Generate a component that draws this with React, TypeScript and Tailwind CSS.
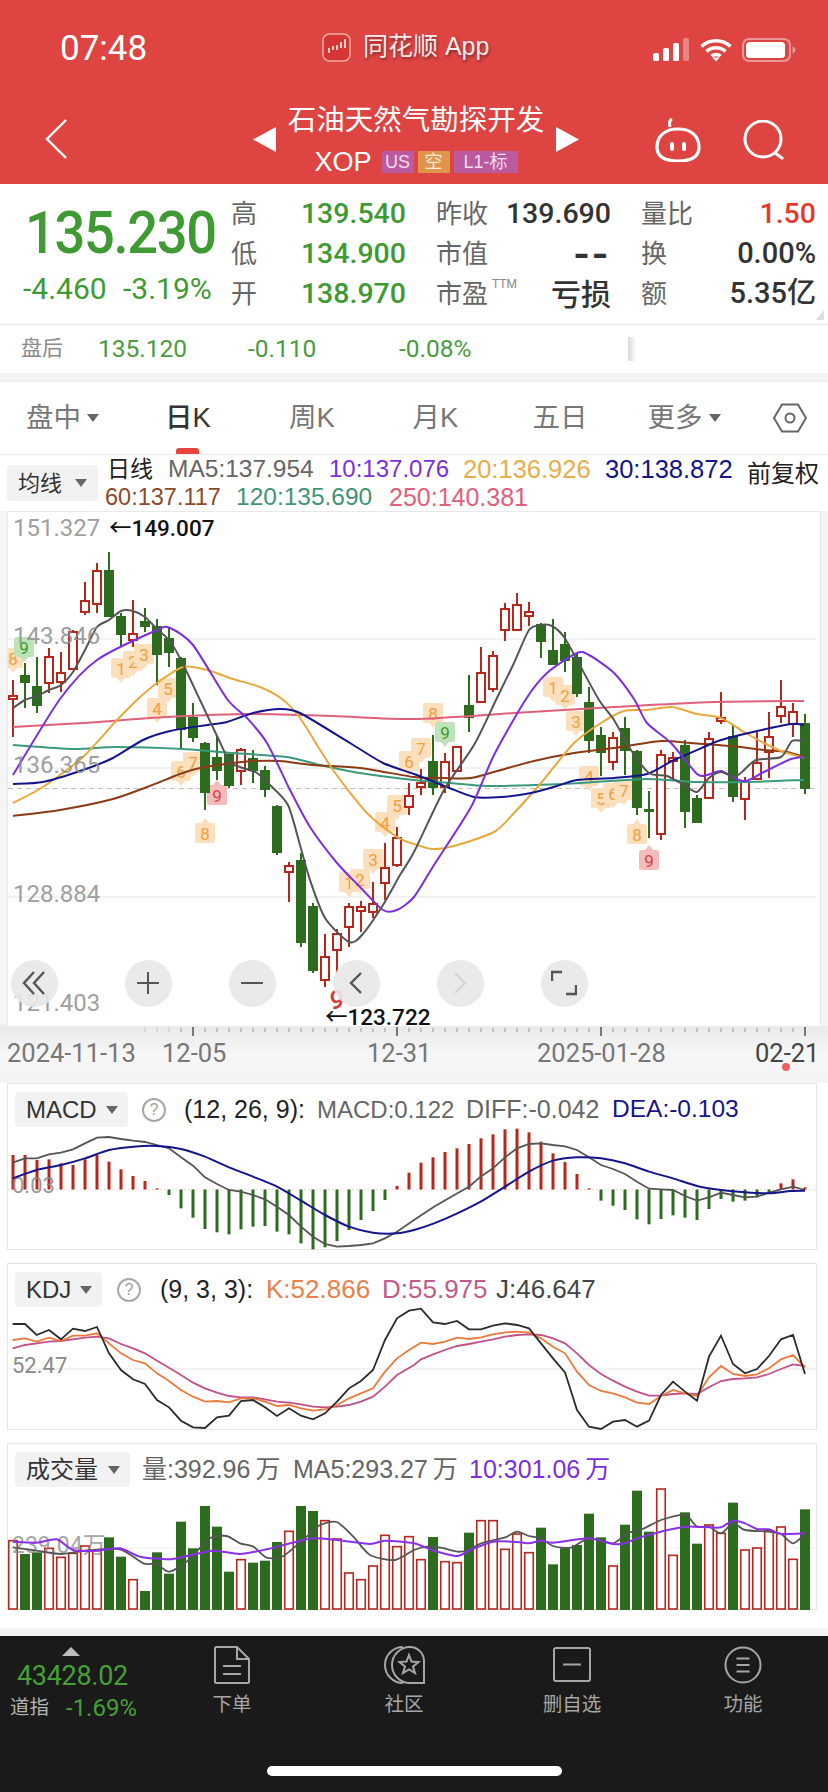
import React from 'react';

type Pt = [number, number];

const ROBOTO = "[font-family:Roboto,'Noto_Sans_CJK_SC',sans-serif]";
const UP = '#b8261c';
const DOWN = '#2d6b1e';

// [red?, high, bodyTop, bodyBottom, low]
const CANDLES: [number, number, number, number, number][] = [
  [1, 680, 696, 699, 737], [0, 663, 675, 683, 708], [0, 657, 686, 706, 713], [1, 648, 657, 683, 693],
  [1, 652, 673, 682, 692], [1, 630, 632, 669, 670], [1, 582, 601, 612, 615], [1, 563, 571, 604, 613],
  [0, 552, 570, 617, 617], [0, 613, 616, 635, 647], [1, 600, 634, 640, 647], [0, 608, 621, 627, 632],
  [0, 619, 626, 655, 685], [0, 628, 638, 653, 667], [0, 657, 658, 730, 748], [0, 703, 717, 738, 742],
  [0, 742, 743, 793, 810], [0, 736, 757, 771, 780], [0, 752, 754, 786, 788], [1, 748, 750, 771, 785],
  [0, 750, 758, 771, 783], [0, 766, 770, 790, 797], [0, 805, 806, 853, 855], [1, 862, 866, 872, 902],
  [0, 853, 860, 943, 947], [0, 903, 906, 971, 973], [1, 934, 957, 980, 987], [1, 929, 934, 950, 973],
  [1, 903, 907, 927, 947], [1, 901, 907, 911, 932], [1, 882, 904, 912, 918], [1, 843, 868, 883, 900],
  [1, 827, 838, 865, 867], [1, 783, 796, 807, 815], [1, 769, 783, 787, 795], [0, 735, 761, 788, 795],
  [1, 753, 762, 787, 793], [1, 747, 747, 771, 771], [0, 675, 705, 718, 732], [1, 647, 673, 702, 703],
  [1, 651, 656, 689, 692], [1, 603, 609, 630, 641], [1, 593, 605, 630, 630], [1, 602, 612, 616, 626],
  [0, 623, 624, 642, 658], [0, 619, 650, 665, 665], [0, 632, 644, 661, 672], [0, 653, 657, 694, 697],
  [0, 687, 702, 741, 753], [0, 727, 735, 753, 776], [1, 732, 738, 762, 770], [0, 717, 728, 751, 775],
  [0, 750, 751, 808, 815], [0, 791, 809, 812, 838], [1, 750, 755, 834, 840], [1, 752, 758, 761, 780],
  [0, 740, 745, 812, 828], [0, 795, 798, 823, 823], [1, 732, 739, 798, 798], [1, 692, 718, 721, 724],
  [0, 725, 736, 797, 802], [1, 777, 782, 799, 820], [1, 732, 763, 779, 779], [1, 712, 737, 752, 778],
  [1, 680, 707, 716, 723], [1, 703, 712, 724, 737], [0, 714, 723, 789, 794],
];

const MA: { color: string; pts: Pt[] }[] = [
  { color: '#e0607a', pts: [[13, 727], [83, 723], [167, 717], [253, 714], [333, 716], [414, 719], [514, 713], [614, 707], [714, 702], [804, 701]] },
  { color: '#3a9a7c', pts: [[13, 745], [73, 749], [117, 747], [183, 749], [233, 753], [287, 757], [320, 765], [360, 773], [414, 780], [451, 783], [487, 786], [534, 785], [581, 783], [647, 779], [697, 782], [747, 782], [804, 780]] },
  { color: '#8c3a14', pts: [[13, 816], [60, 810], [113, 799], [147, 787], [180, 774], [200, 768], [233, 763], [253, 761], [280, 761], [313, 765], [360, 768], [414, 777], [444, 778], [471, 778], [497, 771], [534, 761], [574, 753], [614, 748], [661, 741], [691, 743], [731, 746], [764, 750], [787, 752], [804, 757]] },
  { color: '#e8a93c', pts: [[13, 803], [43, 787], [83, 757], [117, 720], [138, 699], [157, 683], [183, 667], [207, 670], [233, 679], [260, 687], [282, 699], [300, 718], [333, 770], [367, 813], [397, 837], [414, 844], [432, 849], [454, 846], [494, 832], [514, 813], [541, 783], [574, 743], [601, 723], [624, 711], [647, 710], [672, 707], [697, 714], [721, 718], [744, 732], [764, 743], [781, 751], [804, 758]] },
  { color: '#14148c', pts: [[13, 784], [43, 782], [83, 770], [113, 758], [143, 740], [170, 731], [207, 725], [227, 722], [253, 713], [280, 709], [300, 713], [350, 743], [383, 763], [414, 774], [447, 787], [474, 797], [501, 797], [531, 793], [557, 786], [577, 780], [614, 778], [647, 774], [674, 760], [704, 747], [721, 740], [757, 731], [791, 724], [804, 725]] },
  { color: '#7b2fe0', pts: [[13, 775], [60, 699], [97, 660], [157, 630], [170, 628], [193, 645], [227, 699], [247, 718], [267, 743], [290, 790], [310, 827], [337, 863], [360, 887], [383, 910], [397, 910], [414, 897], [434, 865], [471, 807], [494, 755], [526, 699], [547, 673], [577, 653], [589, 655], [614, 673], [634, 699], [647, 723], [671, 743], [697, 774], [707, 775], [721, 771], [734, 778], [746, 781], [764, 772], [791, 759], [804, 757]] },
  { color: '#555555', pts: [[13, 708], [25, 700], [37, 696], [49, 690], [61, 685], [73, 672], [85, 650], [97, 627], [109, 620], [121, 611], [133, 611], [145, 617], [157, 629], [169, 640], [181, 660], [200, 700], [217, 736], [230, 762], [240, 767], [257, 773], [270, 785], [288, 805], [300, 845], [310, 880], [325, 918], [349, 942], [362, 935], [383, 905], [400, 875], [414, 852], [444, 790], [474, 745], [496, 700], [514, 663], [529, 630], [541, 625], [552, 626], [564, 637], [577, 660], [599, 700], [614, 720], [631, 750], [649, 773], [667, 776], [684, 785], [697, 792], [709, 778], [721, 772], [734, 777], [742, 772], [756, 760], [781, 757], [792, 741], [804, 741]] },
];

// signal tags: [x, y, text, tone, tip points up]
const TAGS: [number, number, string, 'o' | 'g' | 'r', boolean][] = [
  [13, 658, '8', 'o', false], [24, 647, '9', 'g', false], [121, 668, '1', 'o', false], [133, 661, '2', 'o', false],
  [144, 654, '3', 'o', false], [157, 708, '4', 'o', false], [168, 688, '5', 'o', false], [181, 771, '6', 'o', false],
  [193, 762, '7', 'o', false], [205, 833, '8', 'o', true], [217, 795, '9', 'r', true], [349, 882, '1', 'o', false],
  [360, 879, '2', 'o', false], [373, 859, '3', 'o', false], [385, 822, '4', 'o', false], [397, 805, '5', 'o', false],
  [409, 761, '6', 'o', false], [421, 748, '7', 'o', false], [433, 713, '8', 'o', false], [445, 732, '9', 'g', false],
  [553, 687, '1', 'o', false], [565, 695, '2', 'o', false], [576, 721, '3', 'o', false], [589, 776, '4', 'o', false],
  [601, 798, '5', 'o', false], [613, 793, '6', 'o', false], [624, 790, '7', 'o', false], [637, 834, '8', 'o', true],
  [649, 860, '9', 'r', true],
];

const TAG_TONE = {
  o: { fill: '#fcdfbd', text: '#efa040' },
  g: { fill: '#bfe3b8', text: '#3c9a32' },
  r: { fill: '#f5bcbc', text: '#e04040' },
};

const PRICE_LABELS: [string, number][] = [['151.327', 536], ['143.846', 644], ['136.365', 773], ['128.884', 902], ['121.403', 1011]];

// reference crops were read at 3x, so these tables hold crop coordinates
const MACD_TOPS = [255, 255, 270, 268, 280, 285, 268, 255, 275, 298, 318, 333, 355, 375, 415, 443, 477, 487, 493, 478, 470, 468, 485, 493, 520, 538, 532, 513, 480, 450, 423, 390, 348, 308, 278, 262, 246, 235, 222, 205, 193, 178, 176, 187, 215, 250, 276, 312, 355, 392, 407, 420, 448, 463, 447, 436, 443, 450, 417, 387, 395, 392, 382, 368, 340, 328, 352];

const VOLUME: [number, number][] = [
  [1, 332], [0, 372], [0, 367], [1, 355], [1, 382], [1, 370], [1, 348], [1, 362], [0, 322], [0, 380], [1, 449], [0, 483],
  [0, 367], [0, 431], [0, 275], [0, 355], [0, 228], [0, 290], [0, 425], [1, 389], [0, 398], [0, 392], [0, 336], [1, 304],
  [0, 228], [0, 243], [1, 272], [1, 327], [1, 429], [1, 449], [1, 408], [1, 316], [1, 350], [1, 320], [1, 389], [0, 321],
  [1, 395], [1, 398], [0, 308], [1, 272], [1, 272], [1, 358], [1, 312], [1, 368], [0, 293], [0, 403], [0, 355], [0, 345],
  [0, 251], [0, 322], [1, 408], [0, 284], [0, 182], [0, 305], [1, 177], [1, 376], [0, 247], [0, 341], [1, 285], [1, 310],
  [0, 218], [1, 360], [1, 354], [1, 302], [1, 291], [1, 388], [0, 238],
];

const crop = (left: Pt[], right: Pt[], y0: number): Pt[] => [
  ...left.map(([x, y]): Pt => [x / 3, y0 + y / 3]),
  ...right.map(([x, y]): Pt => [414 + x / 3, y0 + y / 3]),
];

const DIFF = crop(
  [[38, 278], [75, 265], [110, 265], [147, 253], [183, 248], [219, 238], [255, 220], [291, 203], [327, 201], [363, 207], [399, 212], [435, 216], [471, 225], [507, 235], [543, 262], [579, 287], [615, 322], [651, 342], [687, 360], [723, 365], [759, 375], [795, 388], [831, 410], [867, 435], [903, 470], [939, 500], [975, 522], [1011, 530], [1047, 528], [1083, 525], [1119, 520], [1155, 505], [1191, 485]],
  [[0, 450], [60, 410], [130, 370], [165, 350], [200, 320], [237, 295], [273, 262], [309, 235], [345, 222], [381, 220], [417, 225], [453, 229], [489, 240], [525, 262], [561, 285], [597, 297], [633, 312], [669, 335], [705, 356], [741, 358], [777, 360], [813, 378], [849, 392], [885, 382], [921, 368], [957, 375], [993, 382], [1029, 380], [1065, 368], [1101, 358], [1137, 350], [1173, 360]],
  1070,
);
const DEA = crop(
  [[38, 325], [110, 300], [183, 285], [255, 265], [327, 240], [400, 230], [471, 228], [543, 237], [615, 260], [687, 292], [759, 320], [831, 350], [903, 392], [975, 435], [1047, 470], [1119, 488], [1191, 490]],
  [[0, 480], [60, 460], [130, 430], [200, 395], [273, 350], [345, 305], [417, 272], [489, 262], [561, 265], [633, 280], [705, 305], [777, 325], [849, 348], [921, 360], [993, 367], [1065, 370], [1130, 363], [1173, 362]],
  1070,
);
const KDJ_J = crop(
  [[38, 762], [75, 762], [110, 795], [147, 780], [183, 808], [219, 776], [255, 783], [291, 771], [327, 850], [363, 900], [399, 928], [435, 942], [471, 990], [507, 1012], [543, 1052], [579, 1072], [615, 1074], [651, 1042], [687, 1037], [723, 993], [759, 990], [795, 1012], [831, 1038], [867, 1015], [903, 1037], [939, 1048], [975, 1030], [1011, 995], [1047, 955], [1083, 933], [1119, 900], [1155, 810], [1191, 745], [1227, 722]],
  [[21, 716], [57, 757], [93, 762], [129, 753], [165, 778], [201, 778], [237, 767], [273, 760], [309, 765], [345, 775], [381, 820], [417, 865], [453, 907], [489, 1020], [525, 1070], [561, 1077], [597, 1055], [633, 1050], [669, 1070], [705, 1052], [741, 975], [777, 935], [813, 965], [849, 992], [885, 860], [921, 797], [957, 882], [993, 910], [1029, 897], [1065, 858], [1101, 808], [1137, 795], [1173, 912]],
  1070,
);
const KDJ_K = crop(
  [[38, 810], [75, 805], [110, 815], [147, 803], [183, 813], [219, 797], [255, 797], [291, 790], [327, 820], [363, 850], [399, 870], [435, 880], [471, 910], [507, 933], [543, 960], [579, 980], [615, 995], [651, 993], [687, 997], [723, 985], [759, 985], [795, 995], [831, 1008], [867, 1005], [903, 1015], [939, 1022], [975, 1018], [1011, 1005], [1047, 985], [1083, 970], [1119, 955], [1155, 905], [1191, 865], [1227, 840]],
  [[21, 818], [57, 822], [93, 815], [129, 803], [165, 807], [201, 802], [237, 793], [273, 787], [309, 785], [345, 788], [381, 805], [417, 830], [453, 850], [489, 905], [525, 945], [561, 963], [597, 970], [633, 982], [669, 998], [705, 1002], [741, 978], [777, 960], [813, 970], [849, 978], [885, 922], [921, 888], [957, 912], [993, 918], [1029, 913], [1065, 895], [1101, 868], [1137, 855], [1173, 892]],
  1070,
);
const KDJ_D = crop(
  [[38, 835], [75, 825], [110, 820], [147, 815], [183, 813], [219, 808], [255, 803], [291, 800], [327, 805], [363, 822], [399, 835], [435, 850], [471, 872], [507, 893], [543, 915], [579, 938], [615, 955], [651, 968], [687, 978], [723, 982], [759, 982], [795, 988], [831, 995], [867, 998], [903, 1003], [939, 1010], [975, 1012], [1011, 1010], [1047, 1005], [1083, 995], [1119, 980], [1155, 950], [1191, 915]],
  [[0, 885], [21, 868], [57, 853], [93, 840], [129, 828], [165, 822], [201, 815], [237, 808], [273, 800], [309, 795], [345, 793], [381, 795], [417, 805], [453, 820], [489, 850], [525, 885], [561, 912], [597, 932], [633, 950], [669, 965], [705, 977], [741, 977], [777, 972], [813, 970], [849, 972], [885, 952], [921, 933], [957, 927], [993, 925], [1029, 922], [1065, 912], [1101, 897], [1137, 883], [1173, 888]],
  1070,
);
const VOL_MA5 = crop(
  [[38, 352], [110, 362], [183, 372], [255, 362], [360, 358], [430, 400], [470, 402], [507, 425], [560, 395], [630, 325], [680, 318], [720, 340], [760, 350], [800, 383], [850, 378], [920, 320], [960, 285], [1010, 276], [1060, 320], [1110, 375], [1185, 390]],
  [[0, 360], [40, 350], [80, 353], [130, 365], [165, 360], [201, 340], [273, 322], [309, 305], [345, 318], [381, 325], [417, 348], [470, 353], [525, 325], [597, 340], [640, 310], [690, 295], [741, 270], [813, 255], [849, 290], [885, 290], [921, 310], [957, 280], [993, 300], [1065, 305], [1101, 312], [1137, 340], [1173, 312]],
  1430,
);
const VOL_MA10 = crop(
  [[38, 335], [110, 338], [170, 328], [219, 360], [290, 362], [360, 355], [420, 380], [507, 388], [560, 378], [640, 362], [720, 372], [800, 358], [870, 340], [940, 325], [1010, 330], [1110, 342], [1155, 332]],
  [[0, 340], [60, 362], [130, 378], [165, 362], [237, 335], [309, 336], [345, 340], [381, 332], [417, 338], [525, 325], [597, 342], [633, 340], [669, 325], [741, 305], [813, 290], [885, 292], [921, 292], [957, 272], [993, 280], [1029, 297], [1065, 298], [1101, 312], [1173, 310]],
  1430,
);

const smooth = (p: Pt[]) => {
  let d = `M${p[0][0]} ${p[0][1]}`;
  for (let i = 0; i < p.length - 1; i++) {
    const a = p[Math.max(i - 1, 0)];
    const b = p[i];
    const c = p[i + 1];
    const e = p[Math.min(i + 2, p.length - 1)];
    d += ` C${b[0] + (c[0] - a[0]) / 8} ${b[1] + (c[1] - a[1]) / 8} ${c[0] - (e[0] - b[0]) / 8} ${c[1] - (e[1] - b[1]) / 8} ${c[0]} ${c[1]}`;
  }
  return d;
};

const poly = (p: Pt[]) => p.map(q => q.join(',')).join(' ');
const xAt = (i: number) => 13 + 12 * i;

const Caret: React.FC<{ className?: string; fill?: string }> = ({ className = 'w-3 h-2', fill = '#666' }) => (
  <svg viewBox="0 0 12 8" className={className}>
    <polygon points="0,0 12,0 6,8" fill={fill} />
  </svg>
);

const Help: React.FC = () => (
  <span className="w-6 h-6 rounded-full border-2 border-[#a8a8a8] flex items-center justify-center text-[16px] leading-none text-[#a0a0a0]">?</span>
);

const StatusIcons: React.FC = () => (
  <div className="flex items-center">
    <svg viewBox="0 0 36 23" className="w-9 h-[23px]">
      <rect x="0" y="15" width="6" height="8" rx="1.5" fill="#fff" />
      <rect x="10" y="10" width="6" height="13" rx="1.5" fill="#fff" />
      <rect x="20" y="5" width="6" height="18" rx="1.5" fill="#fff" />
      <rect x="30" y="0" width="6" height="23" rx="1.5" fill="#fff" opacity="0.35" />
    </svg>
    <svg viewBox="0 0 32 24" className="w-8 h-6 ml-[11px]">
      <path d="M1.5 8.5a21 21 0 0 1 29 0M6.5 13.5a14 14 0 0 1 19 0M11.5 18.2a7 7 0 0 1 9 0" fill="none" stroke="#fff" strokeWidth="3.6" />
      <polygon points="16,23.5 12.5,19.5 19.5,19.5" fill="#fff" />
    </svg>
    <svg viewBox="0 0 54 24" className="w-[54px] h-6 ml-[10px]">
      <rect x="1" y="1" width="47" height="22" rx="6" fill="none" stroke="#fff" strokeOpacity="0.45" strokeWidth="2" />
      <rect x="4" y="4" width="39" height="16" rx="3.5" fill="#fff" />
      <path d="M50.5 8.5c2 .6 3 2 3 3.5s-1 2.9-3 3.5z" fill="#fff" fillOpacity="0.45" />
    </svg>
  </div>
);

const Header: React.FC = () => (
  <header className="h-[184px] bg-[#dd4442] text-white">
    <div className="h-[94px] flex items-center pl-[60px] pt-[5px]">
      <span className={`w-[262px] text-[35px] ${ROBOTO}`}>07:48</span>
      <div className="w-[331px] flex items-center gap-3 -mt-[5px]">
        <svg viewBox="0 0 29 29" className="w-[29px] h-[29px]">
          <rect x="1" y="1" width="27" height="27" rx="6.5" fill="#d63633" stroke="#f2a8a2" strokeWidth="1.6" />
          <g stroke="#fff" strokeWidth="1.5">
            <path d="M7 15v5M11 13v4M15 12v5M19 9v6M23 6v9" />
          </g>
        </svg>
        <span className="text-[25px] text-[#f6ecec] [text-shadow:1px_2px_3px_rgba(0,0,0,0.4)]">同花顺 App</span>
      </div>
      <StatusIcons />
    </div>
    <div className="h-[90px] flex pl-[45px]">
      <div className="w-[208px] flex items-center h-[90px]">
        <svg viewBox="0 0 22 40" className="w-[22px] h-10">
          <polyline points="21,1 2,20 21,39" fill="none" stroke="#fff" strokeWidth="2.4" />
        </svg>
      </div>
      <div className="w-[23px] h-[90px] flex items-center">
        <svg viewBox="0 0 23 25" className="w-[23px] h-[25px]"><polygon points="23,0 23,25 0,12.5" fill="#fff" /></svg>
      </div>
      <div className="w-[280px] flex flex-col items-center">
        <div className="text-[28.5px] leading-[40px] mt-[6px]">石油天然气勘探开发</div>
        <div className="flex items-center mt-[2px] h-[40px]">
          <span className="text-[27px] font-light mr-[10px]">XOP</span>
          <span className="w-8 h-[22px] bg-[#bb5a9f] text-[18px] leading-[22px] text-center text-[#f3dcec]">US</span>
          <span className="w-8 h-[22px] ml-1 bg-[#e0944c] text-[18px] leading-[22px] text-center text-[#fbead8]">空</span>
          <span className="w-16 h-[22px] ml-1 bg-[#bb5a9f] text-[18px] leading-[22px] text-center text-[#f3dcec]">L1-标</span>
        </div>
      </div>
      <div className="w-[23px] h-[90px] flex items-center">
        <svg viewBox="0 0 23 25" className="w-[23px] h-[25px]"><polygon points="0,0 0,25 23,12.5" fill="#fff" /></svg>
      </div>
      <svg viewBox="0 0 46 44" className="w-[46px] h-11 ml-[76px] mt-6">
        <path d="M15 9c-1-4 0-7 2-8" fill="none" stroke="#fff" strokeWidth="3" />
        <path d="M23 11C10 11 2 18 2 29c0 9 7 14 21 14s21-5 21-14C44 18 36 11 23 11z" fill="none" stroke="#fff" strokeWidth="3.2" />
        <rect x="15" y="24" width="4" height="9" rx="2" fill="#fff" />
        <rect x="27" y="24" width="4" height="9" rx="2" fill="#fff" />
      </svg>
      <svg viewBox="0 0 42 40" className="w-[42px] h-10 ml-[42px] mt-[26px]">
        <circle cx="20" cy="19" r="18" fill="none" stroke="#fff" strokeWidth="3" />
        <line x1="31" y1="32" x2="40" y2="39" stroke="#fff" strokeWidth="3" />
      </svg>
    </div>
  </header>
);

const QUOTE_COLUMNS = [
  [
    { label: '高', value: '139.540', color: 'text-[28.5px] text-[#3f9a33]' },
    { label: '低', value: '134.900', color: 'text-[28.5px] text-[#3f9a33]' },
    { label: '开', value: '138.970', color: 'text-[28.5px] text-[#3f9a33]' },
  ],
  [
    { label: '昨收', value: '139.690', color: 'text-[28.5px] text-[#333]' },
    { label: '市值', value: '--', color: 'text-[46px] leading-none tracking-[3px] text-[#333] font-bold' },
    { label: '市盈', value: '亏损', color: 'text-[30px] text-[#333] font-bold', ttm: true },
  ],
  [
    { label: '量比', value: '1.50', color: 'text-[28.5px] text-[#e03c32]' },
    { label: '换', value: '0.00%', color: 'text-[29px] text-[#333]' },
    { label: '额', value: '5.35亿', color: 'text-[29px] text-[#333]' },
  ],
];

const Quote: React.FC = () => (
  <section className="relative h-[141px] bg-white border-b border-[#e6e6e6] flex">
    <div className={`w-[231px] pl-[23px] pt-[13px] ${ROBOTO}`}>
      <div className="text-[59px] leading-[72px] ml-[2px] font-medium text-[#3f9a33] origin-left scale-x-[0.92] tracking-tight">135.230</div>
      <div className="flex text-[#3f9a33] text-[30px] leading-[36px] mt-[2px]">
        <span className="w-[100px]">-4.460</span>
        <span>-3.19%</span>
      </div>
    </div>
    <div className={`flex gap-[30px] pt-[10px] ${ROBOTO}`}>
      {QUOTE_COLUMNS.map((col, c) => (
        <div key={c} className="w-[175px]">
          {col.map(row => (
            <div key={row.label} className="h-10 flex items-center justify-between">
              <span className="text-[26px] text-[#666]">
                {row.label}
                {row.ttm && <sup className="text-[12px] ml-1 -top-[15px] text-[#888]">TTM</sup>}
              </span>
              <span className={`font-medium ${row.color}`}>{row.value}</span>
            </div>
          ))}
        </div>
      ))}
    </div>
    <svg viewBox="0 0 8 10" className="absolute right-1 bottom-1 w-2 h-[10px]">
      <polygon points="8,0 8,10 0,10" fill="#ddd" />
    </svg>
  </section>
);

const AfterHours: React.FC = () => (
  <section className={`h-12 bg-white flex items-center pl-[21px] text-[24.5px] text-[#4b9b3f] ${ROBOTO}`}>
    <span className="w-[77px] text-[21px] text-[#8a8a8a]">盘后</span>
    <span className="w-[150px]">135.120</span>
    <span className="w-[151px]">-0.110</span>
    <span className="w-[229px]">-0.08%</span>
    <span className="w-2 h-6 bg-gradient-to-r from-[#d8d8d8] to-white" />
  </section>
);

const TABS = ['日K', '周K', '月K', '五日'];

const Tabs: React.FC = () => (
  <nav className="mt-2 h-[74px] bg-white border-t border-b border-[#ececec] grid grid-cols-[125px_126px_122px_125px_124px_124px_82px] items-center text-[27.5px] text-[#777]">
    <div className="flex items-center justify-center gap-[6px]">
      <span>盘中</span>
      <Caret />
    </div>
    {TABS.map((t, i) => (
      <div key={t} className="relative h-full flex items-center justify-center">
        <span className={i === 0 ? 'text-[#333] font-medium' : ''}>{t}</span>
        {i === 0 && <span className="absolute bottom-0 left-[51px] w-[23px] h-[6px] rounded-t-[3px] bg-[#e8453c]" />}
      </div>
    ))}
    <div className="flex items-center justify-center gap-[6px]">
      <span>更多</span>
      <Caret />
    </div>
    <div className="flex justify-center ml-[6px]">
      <svg viewBox="0 0 34 30" className="w-[34px] h-[30px]">
        <polygon points="9,1.5 25,1.5 33,15 25,28.5 9,28.5 1,15" fill="none" stroke="#666" strokeWidth="2" />
        <circle cx="17" cy="15" r="4.5" fill="none" stroke="#666" strokeWidth="2" />
      </svg>
    </div>
  </nav>
);

const Legend: React.FC = () => (
  <div className="h-[56px] bg-white flex pl-[7px] pr-[9px]">
    <div className="w-[91px] h-9 mt-[10px] rounded-[4px] bg-[#f2f2f2] flex items-center pl-[11px] text-[22px] text-[#333]">
      均线
      <Caret className="w-3 h-2 ml-[13px]" />
    </div>
    <div className="ml-[9px] leading-[28px] whitespace-nowrap">
      <div className="flex">
        <span className="w-[61px] text-[23px] text-[#222]">日线</span>
        <span className="w-[161px] text-[24.5px] text-[#666]">MA5:137.954</span>
        <span className="w-[134px] text-[24px] text-[#7b2fe0]">10:137.076</span>
        <span className="w-[142px] text-[25.5px] text-[#e8ad4c]">20:136.926</span>
        <span className="text-[25.5px] text-[#14148c]">30:138.872</span>
      </div>
      <div className="flex -ml-[2px]">
        <span className="w-[131px] text-[23.5px] text-[#8c4a28]">60:137.117</span>
        <span className="w-[153px] text-[24.5px] text-[#3f9478]">120:135.690</span>
        <span className="text-[25px] text-[#e0607a]">250:140.381</span>
      </div>
    </div>
    <span className="ml-auto mt-1 text-[24px] leading-[30px] text-[#222] whitespace-nowrap">前复权</span>
  </div>
);

const ROUND_BTN = 'w-[47px] h-[47px] rounded-full bg-[#e8e8e8]/90 flex items-center justify-center';

const ChartButtons: React.FC = () => (
  <div className="absolute left-[2.5px] top-[447.5px] flex gap-[57px]">
    <div className={`${ROUND_BTN} mr-[10px]`}>
      <svg viewBox="0 0 24 26" className="w-6 h-[26px]"><path d="M12 2L2 13l10 11M22 2L12 13l10 11" fill="none" stroke="#555" strokeWidth="2.4" /></svg>
    </div>
    <div className={ROUND_BTN}>
      <svg viewBox="0 0 22 22" className="w-[22px] h-[22px]"><path d="M11 0v22M0 11h22" stroke="#555" strokeWidth="2" /></svg>
    </div>
    <div className={ROUND_BTN}>
      <svg viewBox="0 0 22 4" className="w-[22px] h-1"><path d="M0 2h22" stroke="#555" strokeWidth="2" /></svg>
    </div>
    <div className={ROUND_BTN}>
      <svg viewBox="0 0 14 24" className="w-[14px] h-6"><path d="M12 2L2 12l10 10" fill="none" stroke="#555" strokeWidth="2.4" /></svg>
    </div>
    <div className={ROUND_BTN}>
      <svg viewBox="0 0 14 24" className="w-[14px] h-6"><path d="M2 2l10 10L2 22" fill="none" stroke="#d6d6d6" strokeWidth="2.4" /></svg>
    </div>
    <div className={ROUND_BTN}>
      <svg viewBox="0 0 26 26" className="w-[26px] h-[26px]"><path d="M1 11V2h10M25 15v9H15" fill="none" stroke="#555" strokeWidth="2.4" /></svg>
    </div>
  </div>
);

const MainChart: React.FC = () => (
  <div className="mx-[7px] relative h-[515px] border-x border-t border-[#e8e8e8] bg-white">
    <svg viewBox="8 512 808 514" className={`block w-[808px] h-[514px] ${ROBOTO}`}>
      {[639, 768, 897].map(y => (
        <line key={y} x1="8" x2="816" y1={y} y2={y} stroke="#eeeeee" strokeWidth="1.5" />
      ))}
      <line x1="8" x2="816" y1="788.5" y2="788.5" stroke="#c8bfae" strokeDasharray="5 4" />
      {TAGS.map(([x, y, t, tone, up], i) => (
        <g key={i}>
          <rect x={x - 10} y={y - 10} width="20" height="20" rx="2.5" fill={TAG_TONE[tone].fill} />
          <polygon points={up ? `${x - 4},${y - 10} ${x},${y - 15} ${x + 4},${y - 10}` : `${x - 4},${y + 10} ${x},${y + 15} ${x + 4},${y + 10}`} fill={TAG_TONE[tone].fill} />
          <text x={x} y={y + 6.5} fontSize="17" textAnchor="middle" fill={TAG_TONE[tone].text}>{t}</text>
        </g>
      ))}
      {CANDLES.map(([red, high, top, bottom, low], i) => {
        const x = xAt(i);
        return red ? (
          <g key={i} stroke={UP} strokeWidth="2">
            <line x1={x} x2={x} y1={high} y2={top} />
            <line x1={x} x2={x} y1={bottom} y2={low} />
            <rect x={x - 4} y={top} width="8" height={Math.max(bottom - top, 2)} fill="#fff" />
          </g>
        ) : (
          <g key={i}>
            <line x1={x} x2={x} y1={high} y2={low} stroke={DOWN} strokeWidth="2" />
            <rect x={x - 5} y={top} width="10" height={bottom - top} fill={DOWN} />
          </g>
        );
      })}
      {MA.map(line => (
        <path key={line.color} d={smooth(line.pts)} fill="none" stroke={line.color} strokeWidth="2" />
      ))}
      {PRICE_LABELS.map(([t, y]) => (
        <text key={t} x="13" y={y} fontSize="24" fill="#8f8f8f" opacity="0.85">{t}</text>
      ))}
      <text x="337" y="1009" fontSize="26" fontWeight="500" textAnchor="middle" fill="#d23a36">9</text>
      <text x="109" y="536" fontSize="22.500" fontWeight="500" fill="#111">←149.007</text>
      <text x="325" y="1025" fontSize="22.500" fontWeight="500" fill="#111">←123.722</text>
    </svg>
    <ChartButtons />
  </div>
);

const DATE_LABELS = [
  { t: '2024-11-13', c: 'w-[128px] text-[#777]' },
  { t: '12-05', c: 'w-[61px] ml-[27px] text-[#777]' },
  { t: '12-31', c: 'w-[61px] ml-[144px] text-[#777]' },
  { t: '2025-01-28', c: 'w-[128px] ml-[109px] text-[#777]' },
  { t: '02-21', c: 'w-[62px] ml-[90px] text-[#444]' },
];

const DateAxis: React.FC = () => (
  <div className="relative h-[57px] bg-gradient-to-b from-[#eaeaea] via-[#f6f6f6] to-[#f4f4f4]">
    <svg viewBox="0 0 828 10" className="block w-[828px] h-[10px]">
      {CANDLES.map((_, i) => {
        if (i < 11) return null;
        const major = i === 15 || i === 32 || i === 49 || i === 66;
        return (
          <line key={i} x1={xAt(i)} x2={xAt(i)} y1={major ? 1 : 2} y2={major ? 10 : 6} stroke={major ? '#777' : '#9a9a9a'} strokeWidth={major ? 2 : 1} opacity={i < 14 ? 0.5 : 1} />
        );
      })}
    </svg>
    <div className={`flex pl-[7px] text-[25.5px] leading-[34px] whitespace-nowrap ${ROBOTO}`}>
      {DATE_LABELS.map(d => (
        <span key={d.t} className={d.c}>{d.t}</span>
      ))}
    </div>
    <span className="absolute left-[782px] top-[37px] w-2 h-2 rounded-full bg-[#e86060]" />
  </div>
);

const Card: React.FC<{ viewBox: string; header: React.ReactNode; children: React.ReactNode }> = ({ viewBox, header, children }) => (
  <div className="w-[810px] h-[167px] border border-[#e6e6e6] bg-white">
    <div className="h-11 flex items-center pl-[7px] pt-[7px] whitespace-nowrap text-[25px]">{header}</div>
    <svg viewBox={viewBox} className={`block w-[808px] h-[121px] overflow-visible ${ROBOTO}`}>
      {children}
    </svg>
  </div>
);

const IndicatorButton: React.FC<{ w: string; label: string }> = ({ w, label }) => (
  <div className={`${w} h-[35px] rounded-[4px] bg-[#f2f2f2] flex items-center justify-between pl-[11px] pr-[10px] text-[#333] text-[24px]`}>
    {label}
    <Caret />
  </div>
);

const MacdCard: React.FC = () => (
  <Card
    viewBox="8 1128 808 121"
    header={
      <>
        <IndicatorButton w="w-[113px]" label="MACD" />
        <span className="ml-[14px] w-[42px]"><Help /></span>
        <span className="w-[133px] text-[#222]">(12, 26, 9):</span>
        <span className="w-[149px] text-[24px] text-[#666]">MACD:0.122</span>
        <span className="w-[146px] text-[#666]">DIFF:-0.042</span>
        <span className="text-[24.5px] text-[#14148c]">DEA:-0.103</span>
      </>
    }
  >
    <line x1="8" x2="816" y1="1189.5" y2="1189.5" stroke="#f3dcdc" strokeDasharray="2 2" />
    {MACD_TOPS.map((z, i) => {
      const y = 1070 + z / 3;
      return (
        <line key={i} x1={xAt(i)} x2={xAt(i)} y1={1189.5} y2={y} stroke={y < 1189.5 ? UP : DOWN} strokeWidth="3" />
      );
    })}
    <text x="12" y="1193" fontSize="22" fill="#888" opacity="0.85">0.03</text>
    <polyline points={poly(DIFF)} fill="none" stroke="#555" strokeWidth="1.8" />
    <path d={smooth(DEA)} fill="none" stroke="#14148c" strokeWidth="2" />
  </Card>
);

const KdjCard: React.FC = () => (
  <Card
    viewBox="8 1308 808 121"
    header={
      <>
        <IndicatorButton w="w-[87px]" label="KDJ" />
        <span className="ml-[15px] w-[43px]"><Help /></span>
        <span className="w-[106px] text-[#222]">(9, 3, 3):</span>
        <span className="w-[116px] text-[26px] text-[#e8804a]">K:52.866</span>
        <span className="w-[114px] text-[26px] text-[#c25a8a]">D:55.975</span>
        <span className="text-[26px] text-[#444]">J:46.647</span>
      </>
    }
  >
    <line x1="8" x2="816" y1="1369" y2="1369" stroke="#eeeeee" strokeWidth="1.5" />
    <text x="12" y="1373" fontSize="22" fill="#8a8a8a">52.47</text>
    <polyline points={poly(KDJ_D)} fill="none" stroke="#c2508a" strokeWidth="1.8" />
    <polyline points={poly(KDJ_K)} fill="none" stroke="#ec7a3c" strokeWidth="1.8" />
    <polyline points={poly(KDJ_J)} fill="none" stroke="#2a2a2a" strokeWidth="1.8" />
  </Card>
);

const VolumeCard: React.FC = () => (
  <Card
    viewBox="8 1488 808 121"
    header={
      <>
        <IndicatorButton w="w-[115px]" label="成交量" />
        <span className="ml-[12px] w-[151px] text-[#666]">量:392.96&thinsp;万</span>
        <span className="w-[176px] text-[#666]">MA5:293.27&thinsp;万</span>
        <span className="text-[#7b2fe0]">10:301.06&thinsp;万</span>
      </>
    }
  >
    <line x1="8" x2="816" y1="1548" y2="1548" stroke="#eeeeee" />
    {VOLUME.map(([red, z], i) => {
      const y = 1430 + z / 3;
      return red ? (
        <rect key={i} x={xAt(i) - 4.25} y={y} width="8.5" height={1609 - y} fill="#fff" stroke={UP} strokeWidth="1.6" />
      ) : (
        <rect key={i} x={xAt(i) - 5} y={y} width="10" height={1610 - y} fill={DOWN} />
      );
    })}
    <text x="12" y="1553" fontSize="23" fill="#8a8a8a" opacity="0.75">239.04万</text>
    <path d={smooth(VOL_MA5)} fill="none" stroke="#555" strokeWidth="1.8" />
    <path d={smooth(VOL_MA10)} fill="none" stroke="#8a2fe8" strokeWidth="2" />
  </Card>
);

const FOOT_STROKE = { fill: 'none', stroke: '#a6a6a6', strokeWidth: 2 };

const FOOT_ITEMS: { label: string; pad: string; icon: React.ReactNode }[] = [
  {
    label: '下单',
    pad: '',
    icon: (
      <svg viewBox="0 0 36 38" className="w-9 h-[38px]">
        <path d="M1 2.5a1.5 1.5 0 0 1 1.5-1.5H23l12 12v22.500a1.500 1.500 0 0 1-1.500 1.500H2.500A1.500 1.500 0 0 1 1 35.500z" {...FOOT_STROKE} />
        <path d="M23 1v12h12M9 20h18M9 28h18" {...FOOT_STROKE} />
      </svg>
    ),
  },
  {
    label: '社区',
    pad: 'pl-[4px]',
    icon: (
      <svg viewBox="0 0 42 38" className="w-[42px] h-[38px]">
        <path d="M20 1A18 18 0 1 0 20 37" {...FOOT_STROKE} />
        <path d="M27 37A18 18 0 1 1 27 1a14 14 0 0 1 14 14v22z" {...FOOT_STROKE} />
        <polygon points="26,9 28.500,15.500 35.500,16 30,20.500 32,27 26,23.500 20,27 22,20.500 16.500,16 23.500,15.500" {...FOOT_STROKE} />
      </svg>
    ),
  },
  {
    label: '删自选',
    pad: '',
    icon: (
      <svg viewBox="0 0 38 36" className="w-[38px] h-9">
        <rect x="1" y="1" width="36" height="33" rx="2" {...FOOT_STROKE} />
        <path d="M10 17.500h18" {...FOOT_STROKE} />
      </svg>
    ),
  },
  {
    label: '功能',
    pad: 'pl-[2px]',
    icon: (
      <svg viewBox="0 0 38 38" className="w-[38px] h-[38px]">
        <circle cx="19" cy="19" r="17.500" {...FOOT_STROKE} />
        <path d="M12.500 12.500h13M12.500 19h13M12.500 25.500h13" {...FOOT_STROKE} />
      </svg>
    ),
  },
];

const Footer: React.FC = () => (
  <footer className="h-[156px] bg-[#1a1a1a] flex flex-col">
    <div className="h-[130px] flex">
      <div className={`w-[147px] pl-[10px] ${ROBOTO}`}>
        <svg viewBox="0 0 18 9" className="w-[18px] h-[9px] ml-[52px] mt-[11px]">
          <polygon points="9,0 18,9 0,9" fill="#bdbdbd" />
        </svg>
        <div className="ml-[7px] mt-[3px] text-[27px] leading-[34px] text-[#45a036] tracking-[-0.3px]">43428.02</div>
        <div className="flex items-center mt-[1px] leading-[28px]">
          <span className="w-[56px] text-[19.500px] text-[#b5b5b5]">道指</span>
          <span className="text-[24px] text-[#45a036]">-1.69%</span>
        </div>
      </div>
      {FOOT_ITEMS.map(item => (
        <div key={item.label} className={`w-[170px] flex flex-col items-center pt-[10px] ${item.pad}`}>
          <div className="h-[38px] flex items-center">{item.icon}</div>
          <span className="mt-[6px] text-[19.500px] leading-[28px] text-[#a6a6a6]">{item.label}</span>
        </div>
      ))}
    </div>
    <div className="w-[295px] h-[10px] mx-auto rounded-full bg-white" />
  </footer>
);

export default function App() {
  return (
    <div className="w-[828px] h-[1792px] overflow-hidden bg-[#f4f4f4] [font-family:'Liberation_Sans','Noto_Sans_CJK_SC',sans-serif]">
      <Header />
      <Quote />
      <AfterHours />
      <Tabs />
      <Legend />
      <MainChart />
      <DateAxis />
      <section className="bg-white h-[545px] px-[7px] flex flex-col gap-[13px]">
        <MacdCard />
        <KdjCard />
        <VolumeCard />
      </section>
      <div className="h-2" />
      <Footer />
    </div>
  );
}
